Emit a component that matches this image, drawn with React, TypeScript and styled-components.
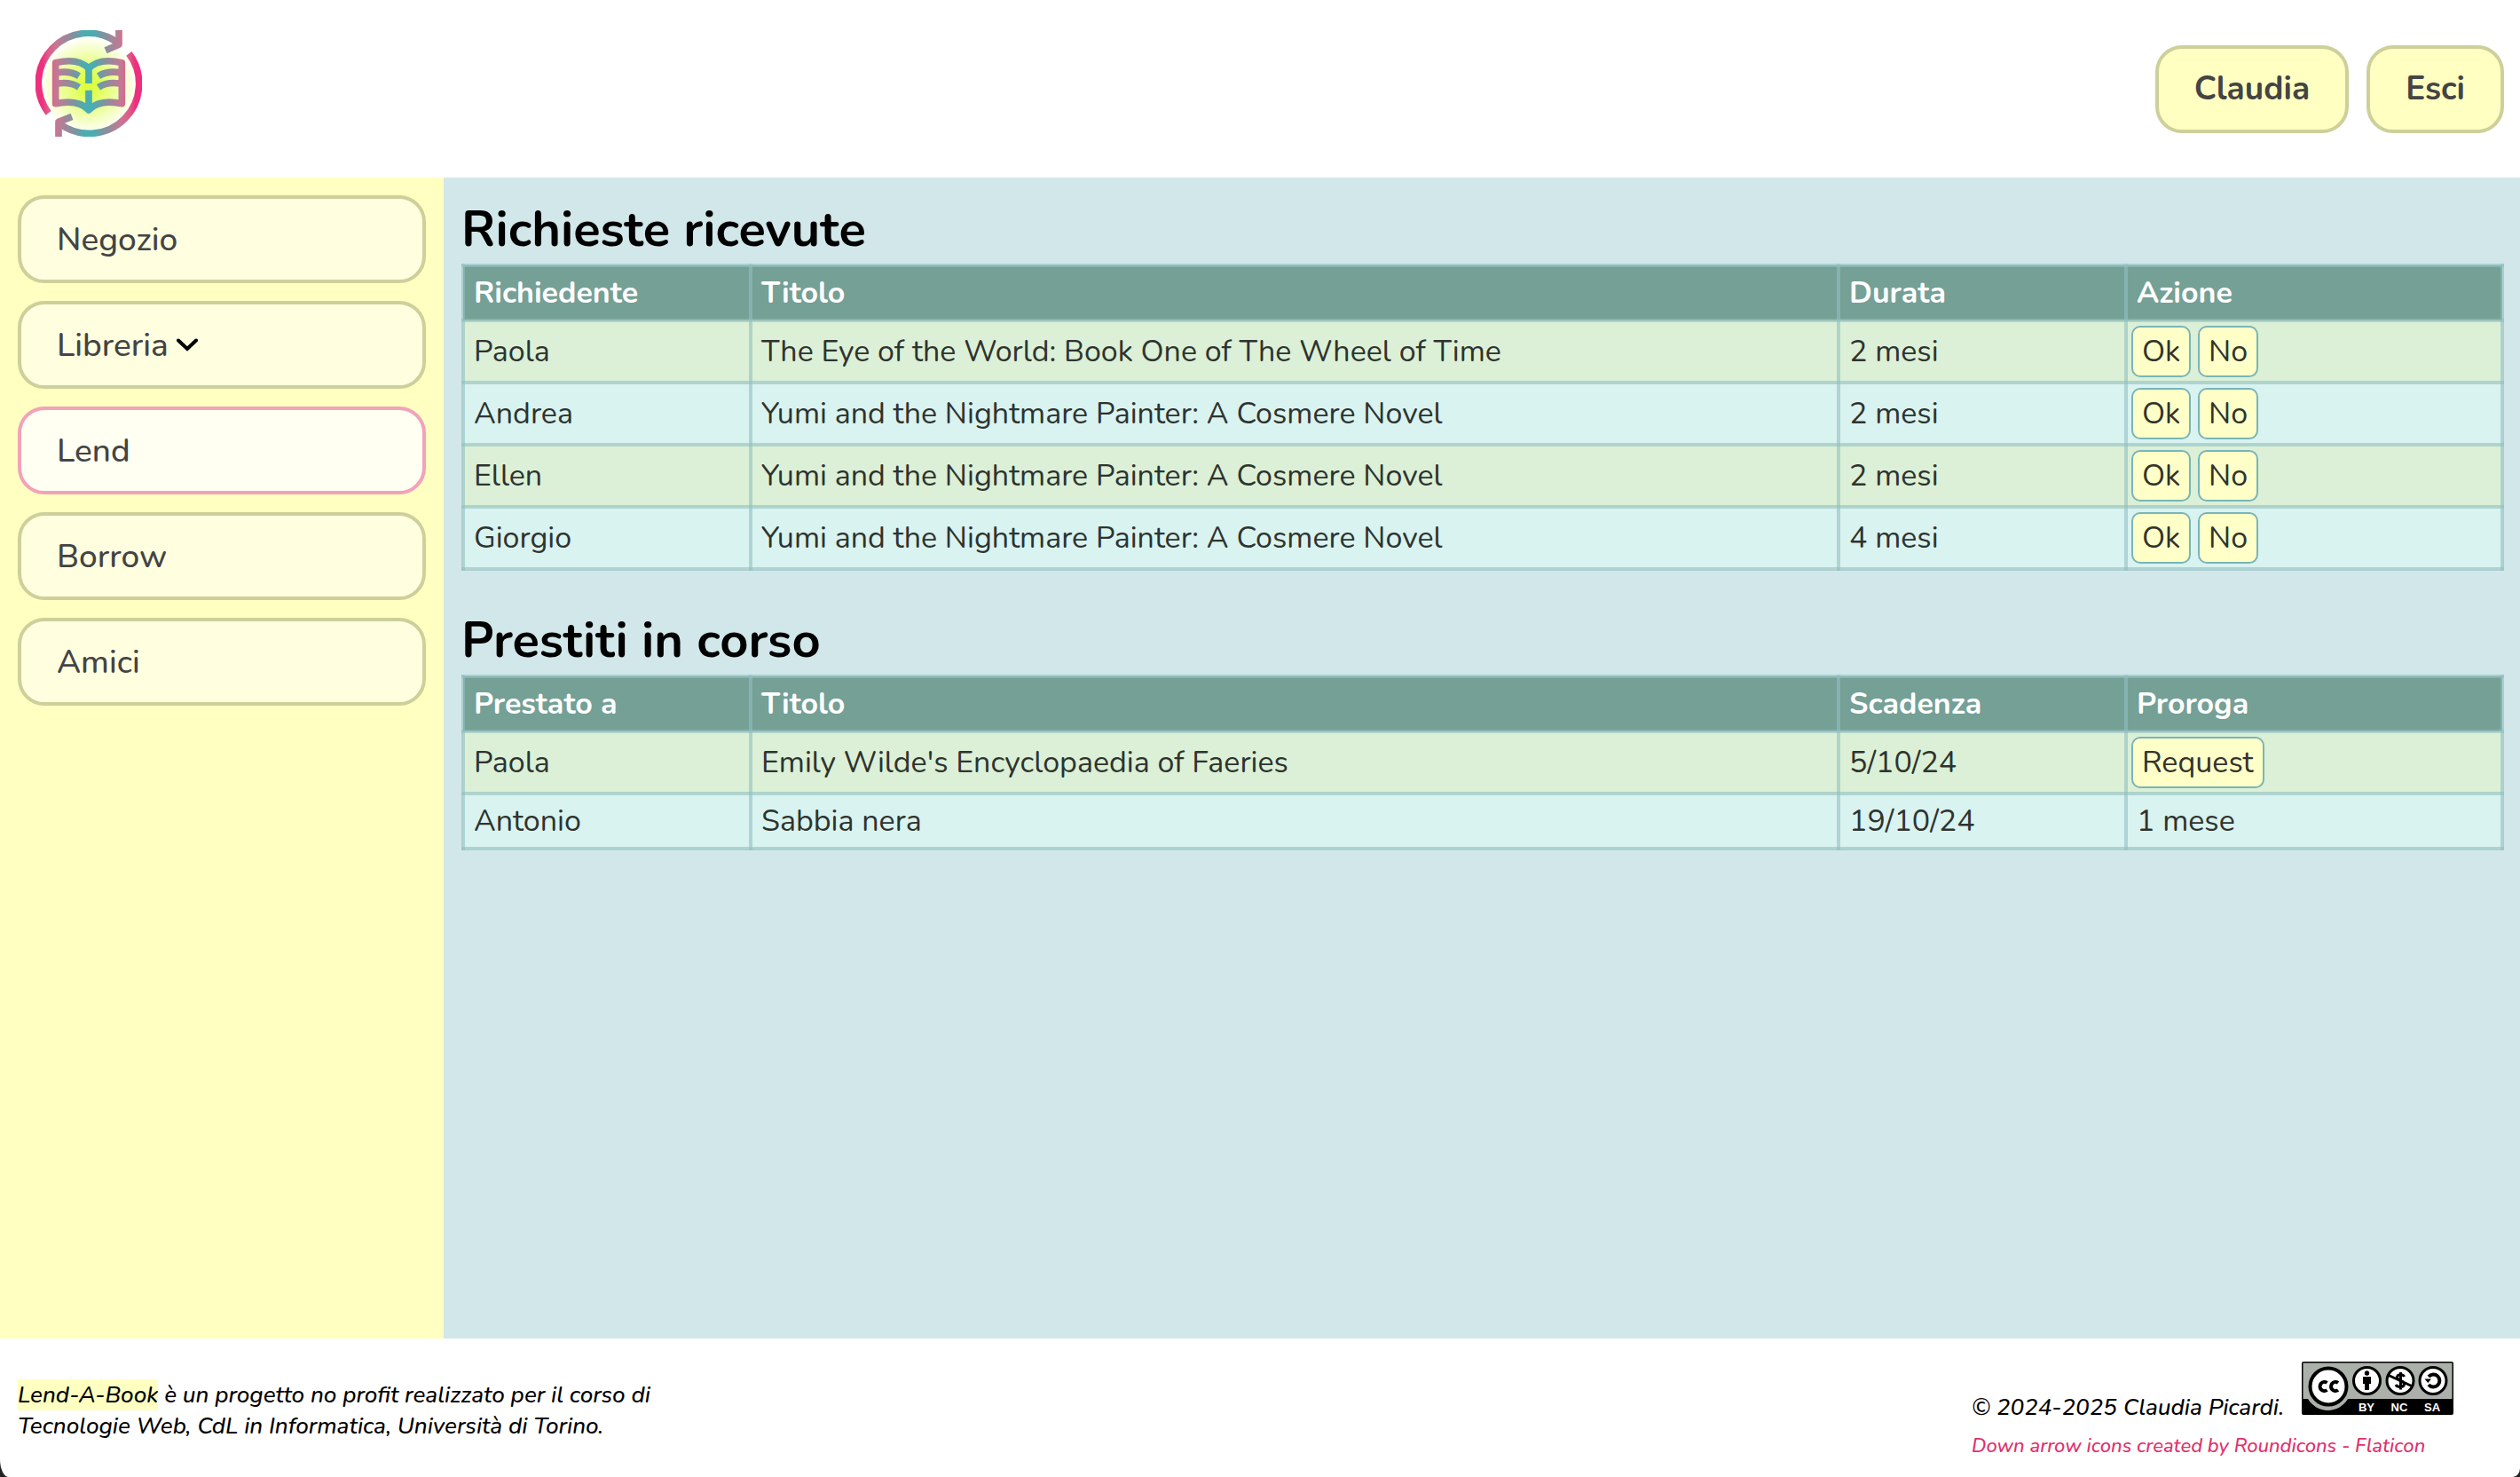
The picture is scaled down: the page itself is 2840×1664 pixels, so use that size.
import React from "react";
import styled, { createGlobalStyle, css } from "styled-components";

const GlobalStyle = createGlobalStyle`
  *, *::before, *::after { box-sizing: border-box; }
  body {
    margin: 0;
    background: #222;
    font-family: Nunito, Lato, "Open Sans", sans-serif;
    font-size: 34px;
  }
`;

const Page = styled.div`
  display: grid;
  grid-template-rows: 200px 1fr auto;
  min-height: 100vh;
  background: #fff;
  border-radius: 0 0 8px 10px / 0 0 10px 20px;
  overflow: hidden;
`;

const Header = styled.header`
  display: flex;
  align-items: center;
  justify-content: space-between;
  padding: 0 18px 0 40px;
`;

const HomeLink = styled.a`
  display: block;
  padding-bottom: 12px;
  svg { display: block; width: 120px; height: 120px; }
`;

const UserActions = styled.div`
  display: flex;
  gap: 20px;
`;

const pill = css`
  display: flex;
  align-items: center;
  height: 99px;
  padding: 0 40px;
  border: 4px solid #cdd09a;
  border-radius: 30px;
  color: #444;
  font-family: inherit;
  font-size: 37px;
  text-decoration: none;
`;

const UserButton = styled.button`
  ${pill}
  background: #feffc0;
  font-weight: 700;
  cursor: pointer;
`;

const Body = styled.div`
  display: grid;
  grid-template-columns: 500px 1fr;
`;

const Sidebar = styled.nav`
  display: flex;
  flex-direction: column;
  gap: 20px;
  padding: 20px;
  background: #feffc0;
`;

const NavLink = styled.a<{ $active?: boolean }>`
  ${pill}
  gap: 9px;
  font-weight: 500;
  background: ${(p) => (p.$active ? "#fffff2" : "#ffffe0")};
  border-color: ${(p) => (p.$active ? "#f2a2b9" : "#cdd09a")};
`;

const Main = styled.main`
  display: flex;
  flex-direction: column;
  gap: 40px;
  padding: 20px 18px 20px 20px;
  background: #d2e7e9;
`;

const Section = styled.section``;

const Title = styled.h2`
  margin: 0;
  color: #000;
  font-size: 56px;
  line-height: 77px;
  font-weight: 700;
`;

const Table = styled.table`
  width: 100%;
  border-collapse: collapse;
  table-layout: fixed;
`;

const Col = styled.col<{ $width?: number }>`
  width: ${(p) => (p.$width ? `${p.$width}px` : "auto")};
`;

const cell = css`
  padding: 6px 10px;
  border: 4px solid rgba(145, 192, 192, 0.6);
  line-height: 46px;
  text-align: left;
`;

const HeadCell = styled.th`
  ${cell}
  color: #fff;
  background: #75a096;
  font-weight: 700;
`;

const BodyRow = styled.tr`
  color: #2f332f;
  background: #d9f3f0;
  &:nth-child(odd) { background: #dbf0d6; }
`;

const Cell = styled.td`
  ${cell}
`;

const ActionCell = styled.td`
  ${cell}
  padding: 4px;
`;

const Actions = styled.div`
  display: flex;
  gap: 8px;
`;

const ActionButton = styled.button`
  padding: 4px 10px;
  border: 2px solid #78b5b8;
  border-radius: 10px;
  background: #ffffc8;
  color: #33332b;
  font-family: inherit;
  font-size: 34px;
  line-height: 46px;
  cursor: pointer;
`;

const Footer = styled.footer`
  display: flex;
  justify-content: space-between;
  align-items: center;
  min-height: 156px;
  padding: 6px 75px 0 20px;
  font-size: 26px;
  font-weight: 500;
  line-height: 35px;
  font-style: italic;
  color: #000;
`;

const About = styled.p`
  margin: 0;
  max-width: 740px;
`;

const Mark = styled.mark`
  background: #feffc0;
  color: inherit;
`;

const Credits = styled.div`
  display: flex;
  flex-direction: column;
  gap: 10px;
`;

const Licence = styled.div`
  display: flex;
  align-items: baseline;
  gap: 20px;
  svg { display: block; width: 171px; height: 60px; }
`;

const CreditLink = styled.a`
  color: #e0306c;
  font-size: 22px;
  line-height: 32px;
  text-decoration: none;
`;

const Logo = () => (
  <svg viewBox="120 102 360 360" role="img" aria-label="Lend-A-Book">
    <defs>
      <linearGradient id="ring" gradientUnits="userSpaceOnUse" x1="120" y1="0" x2="300" y2="0" spreadMethod="reflect">
        <stop offset="0.12" stopColor="#ee2f7e" />
        <stop offset="0.24" stopColor="#de5c88" />
        <stop offset="0.4" stopColor="#c57894" />
        <stop offset="0.72" stopColor="#7f939f" />
        <stop offset="0.92" stopColor="#4aadb2" />
      </linearGradient>
      <radialGradient id="glow" gradientUnits="userSpaceOnUse" cx="300" cy="288" r="165">
        <stop offset="0" stopColor="#dcff35" />
        <stop offset="0.2" stopColor="#dfff4f" />
        <stop offset="1" stopColor="#dfff4f" stopOpacity="0" />
      </radialGradient>
    </defs>
    <circle cx="300" cy="282" r="165" fill="url(#glow)" />
    <g fill="none" stroke="url(#ring)" strokeWidth="23">
      <path d="M164 382A168.500 168.500 0 0 1 396 143" />
      <path d="M436 181A168.500 168.500 0 0 1 204 420" />
      <path d="M402 102V151L357 170" strokeLinejoin="round" />
      <path d="M198 462V412L243 394" strokeLinejoin="round" />
      <path strokeLinejoin="round" d="M300 282V232Q266 194 188 212V350Q266 334 300 372Q334 334 412 350V212Q334 194 300 232M300 305V372" />
      <path d="M196 245Q238 239 267 257M196 282Q238 276 267 295M404 245Q362 239 333 257M404 282Q362 276 333 295" />
    </g>
  </svg>
);

const Chevron = () => (
  <svg width="24" height="15" viewBox="0 0 24 15" aria-hidden="true">
    <path d="M2 2.500L12 12L22 2.500" fill="none" stroke="#000" strokeWidth="4" strokeLinecap="round" />
  </svg>
);

const LicenceBadge = () => (
  <svg viewBox="0 0 171 60" role="img" aria-label="Creative Commons BY-NC-SA">
    <rect width="171" height="60" rx="2" fill="#000" />
    <path d="M1.500 1.500H169.500V42H52A26 26 0 0 1 7 42H1.500Z" fill="#abb1aa" />
    <circle cx="30" cy="28" r="20.500" fill="#fff" stroke="#000" strokeWidth="4" />
    <g fill="none" stroke="#000" strokeWidth="4">
      <path d="M28.500 24A5 5 0 1 0 28.500 32" />
      <path d="M41 24A5 5 0 1 0 41 32" />
    </g>
    <g fill="#fff" stroke="#000" strokeWidth="3">
      <circle cx="73.500" cy="21.500" r="15" />
      <circle cx="111" cy="21.500" r="15" />
      <circle cx="148" cy="21.500" r="15" />
    </g>
    <circle cx="73.500" cy="13" r="2.700" />
    <path d="M69 17H78V25H76V32H71V25H69Z" />
    <path d="M115.500 17C114 13.500 107 14 107.500 18C108 22 115.500 21 115.500 25.500C115 29.500 107.500 29 106 26M111.500 12V31.500" fill="none" stroke="#000" strokeWidth="3" />
    <path d="M97 15L125 28" stroke="#000" strokeWidth="3" />
    <path d="M143 17A7 7 0 1 1 143 26" fill="none" stroke="#000" strokeWidth="4" />
    <path d="M138.500 19.500H146L142.300 24Z" />
    <g fill="#fff" fontFamily="Liberation Sans, sans-serif" fontSize="13" fontStyle="normal" fontWeight="700" textAnchor="middle">
      <text x="73" y="56">BY</text>
      <text x="110" y="56">NC</text>
      <text x="147" y="56">SA</text>
    </g>
  </svg>
);

type RowData = { person: string; title: string; when: string; actions?: string[]; note?: string };

const requests: RowData[] = [
  { person: "Paola", title: "The Eye of the World: Book One of The Wheel of Time", when: "2 mesi", actions: ["Ok", "No"] },
  { person: "Andrea", title: "Yumi and the Nightmare Painter: A Cosmere Novel", when: "2 mesi", actions: ["Ok", "No"] },
  { person: "Ellen", title: "Yumi and the Nightmare Painter: A Cosmere Novel", when: "2 mesi", actions: ["Ok", "No"] },
  { person: "Giorgio", title: "Yumi and the Nightmare Painter: A Cosmere Novel", when: "4 mesi", actions: ["Ok", "No"] },
];

const loans: RowData[] = [
  { person: "Paola", title: "Emily Wilde's Encyclopaedia of Faeries", when: "5/10/24", actions: ["Request"] },
  { person: "Antonio", title: "Sabbia nera", when: "19/10/24", note: "1 mese" },
];

const LoanTable = ({ title, heads, rows }: { title: string; heads: string[]; rows: RowData[] }) => (
  <Section>
    <Title>{title}</Title>
    <Table>
      <colgroup>
        <Col $width={324} />
        <Col />
        <Col $width={324} />
        <Col $width={424} />
      </colgroup>
      <thead>
        <tr>
          {heads.map((h) => (
            <HeadCell key={h} scope="col">{h}</HeadCell>
          ))}
        </tr>
      </thead>
      <tbody>
        {rows.map((r) => (
          <BodyRow key={r.person}>
            <Cell>{r.person}</Cell>
            <Cell>{r.title}</Cell>
            <Cell>{r.when}</Cell>
            {r.actions ? (
              <ActionCell>
                <Actions>
                  {r.actions.map((a) => (
                    <ActionButton key={a} type="button">{a}</ActionButton>
                  ))}
                </Actions>
              </ActionCell>
            ) : (
              <Cell>{r.note}</Cell>
            )}
          </BodyRow>
        ))}
      </tbody>
    </Table>
  </Section>
);

export default function App() {
  return (
    <>
      <GlobalStyle />
      <Page>
        <Header>
          <HomeLink href="#"><Logo /></HomeLink>
          <UserActions>
            <UserButton type="button">Claudia</UserButton>
            <UserButton type="button">Esci</UserButton>
          </UserActions>
        </Header>
        <Body>
          <Sidebar>
            <NavLink href="#negozio">Negozio</NavLink>
            <NavLink href="#libreria">Libreria<Chevron /></NavLink>
            <NavLink href="#lend" $active aria-current="page">Lend</NavLink>
            <NavLink href="#borrow">Borrow</NavLink>
            <NavLink href="#amici">Amici</NavLink>
          </Sidebar>
          <Main>
            <LoanTable title="Richieste ricevute" heads={["Richiedente", "Titolo", "Durata", "Azione"]} rows={requests} />
            <LoanTable title="Prestiti in corso" heads={["Prestato a", "Titolo", "Scadenza", "Proroga"]} rows={loans} />
          </Main>
        </Body>
        <Footer>
          <About>
            <Mark>Lend-A-Book</Mark> è un progetto no profit realizzato per il corso di<br />
            Tecnologie Web, CdL in Informatica, Università di Torino.
          </About>
          <Credits>
            <Licence>
              <span>© 2024-2025 Claudia Picardi.</span>
              <LicenceBadge />
            </Licence>
            <CreditLink href="#credits">Down arrow icons created by Roundicons - Flaticon</CreditLink>
          </Credits>
        </Footer>
      </Page>
    </>
  );
}
